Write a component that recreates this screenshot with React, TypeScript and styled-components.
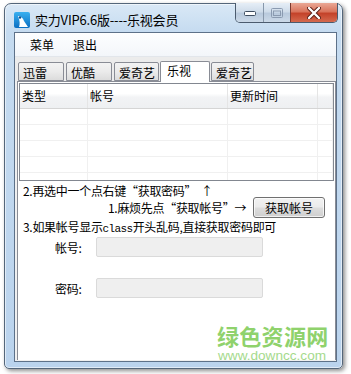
import React from 'react';
import styled, { createGlobalStyle } from 'styled-components';

const GlobalStyle = createGlobalStyle`
  html, body {
    margin: 0;
    padding: 0;
    background: #ffffff;
  }
  * {
    box-sizing: border-box;
  }
`;

const cjk = `"Noto Sans CJK SC", "Noto Sans", sans-serif`;

const Screen = styled.div`
  width: 351px;
  height: 374px;
  padding: 3px 0 0 4px;
  overflow: hidden;
  font-family: ${cjk};
  font-size: 12px;
  color: #000;
`;

const Frame = styled.div`
  width: 339px;
  height: 366px;
  display: flex;
  flex-direction: column;
  border: 1px solid #54667a;
  border-radius: 7px 7px 5px 5px;
  background: linear-gradient(180deg, #d9e8f6 0px, #c5dbf0 28px, #bad3ed 100%);
  box-shadow: 2px 2px 4px rgba(0, 0, 0, 0.45), inset 0 0 0 1px rgba(255, 255, 255, 0.55);
`;

const TitleBar = styled.div`
  height: 28px;
  display: flex;
  align-items: flex-start;
  flex-shrink: 0;
`;

const AppIcon = styled.svg`
  margin: 8px 0 0 9px;
  flex-shrink: 0;
`;

const Title = styled.div`
  margin: 7px 0 0 5px;
  font-size: 13px;
  line-height: 18px;
  letter-spacing: -0.2px;
`;

const Controls = styled.div`
  margin: -1px 4px 0 auto;
  display: flex;
  border: 1px solid #4b5b6e;
  border-top: none;
  border-radius: 0 0 5px 5px;
  overflow: hidden;
`;

const CtlButton = styled.div<{ $w: number; $close?: boolean }>`
  width: ${({ $w }) => $w}px;
  height: 19px;
  display: flex;
  align-items: center;
  justify-content: center;
  border-left: ${({ $close }) => ($close ? '1px solid #7a3a30' : '1px solid #8797aa')};
  background: ${({ $close }) =>
    $close
      ? 'linear-gradient(180deg, #eaa896 0%, #d9755d 45%, #c4432a 55%, #d4694e 100%)'
      : 'linear-gradient(180deg, #e6eef7 0%, #cfdcea 45%, #b9cadd 55%, #cbd9e8 100%)'};
  &:first-child {
    border-left: none;
  }
`;

const Client = styled.div`
  flex: 1;
  margin: 0 5px 6px 9px;
  display: flex;
  flex-direction: column;
  border: 1px solid #5d7189;
  background: #f0f0f0;
`;

const MenuBar = styled.div`
  height: 24px;
  display: flex;
  align-items: center;
  padding-left: 15px;
  gap: 19px;
  background: linear-gradient(180deg, #fdfeff 0%, #f3f6fa 100%);
  border-bottom: 1px solid #e2e6eb;
`;

const MenuItem = styled.span`
  line-height: 16px;
`;

const TabStrip = styled.div`
  height: 24px;
  display: flex;
  align-items: flex-end;
  gap: 2px;
  padding-left: 3px;
  background: #ececec;
`;

const Tab = styled.div<{ $w: number; $active?: boolean }>`
  width: ${({ $w }) => $w}px;
  height: ${({ $active }) => ($active ? 21 : 19)}px;
  margin: ${({ $active }) => ($active ? '0 -1px -1px' : '0')};
  padding: ${({ $active }) => ($active ? '1px 0 0 6px' : '2px 0 0 4px')};
  border: 1px solid #898c95;
  border-bottom: ${({ $active }) => ($active ? 'none' : '1px solid #898c95')};
  border-radius: 2px 2px 0 0;
  background: ${({ $active }) =>
    $active ? '#ffffff' : 'linear-gradient(180deg, #f3f3f3 0%, #ebebeb 50%, #dcdcdc 100%)'};
  font-size: 12px;
  line-height: 15px;
  position: relative;
  z-index: ${({ $active }) => ($active ? 2 : 1)};
`;

const Panel = styled.div`
  flex: 1;
  margin: 0 0 1px 2px;
  position: relative;
  background: #ffffff;
  border: 1px solid #898c95;
  border-bottom: none;
  padding: 1px 1px 0 1px;
  display: flex;
  flex-direction: column;
`;

const ListView = styled.div`
  height: 98px;
  border: 1px solid #828790;
  overflow: hidden;
  flex-shrink: 0;
`;

const HeaderRow = styled.div`
  height: 25px;
  display: flex;
  background: linear-gradient(180deg, #ffffff 0%, #ffffff 40%, #f2f3f5 55%, #eef0f2 100%);
  border-bottom: 1px solid #d5d5d5;
`;

const HeaderCell = styled.div<{ $w?: number }>`
  ${({ $w }) => ($w ? `width: ${$w}px;` : 'flex: 1;')}
  padding: 5px 0 0 ${({ $w }) => ($w ? 2 : 0)}px;
  border-right: 1px solid #e5e5e5;
  font-size: 12px;
  line-height: 14px;
`;

const GridRow = styled.div`
  height: 16px;
  display: flex;
  border-bottom: 1px solid #f0f0f0;
`;

const GridCell = styled.div<{ $w?: number }>`
  ${({ $w }) => ($w ? `width: ${$w}px;` : 'flex: 1;')}
  border-right: 1px solid #f0f0f0;
`;

const Info = styled.div`
  display: flex;
  flex-direction: column;
  padding-left: 4px;
`;

const Line = styled.div<{ $h: number; $indent?: number; $top?: number }>`
  height: ${({ $h }) => $h}px;
  display: flex;
  align-items: center;
  padding-left: ${({ $indent }) => $indent ?? 0}px;
  margin-top: ${({ $top }) => $top ?? 0}px;
  white-space: nowrap;
  font-size: 12px;
  letter-spacing: -0.3px;
`;

const TextLine = styled.div<{ $h: number }>`
  height: ${({ $h }) => $h}px;
  line-height: ${({ $h }) => $h}px;
  white-space: nowrap;
  font-size: 12px;
  letter-spacing: -0.3px;
`;

const Mono = styled.span`
  font-family: "Liberation Mono", monospace;
  font-size: 11px;
  letter-spacing: -0.6px;
  vertical-align: baseline;
`;

const PushButton = styled.div`
  width: 72px;
  height: 21px;
  margin-left: 7px;
  display: flex;
  align-items: center;
  justify-content: center;
  border: 1px solid #707070;
  border-radius: 3px;
  background: linear-gradient(180deg, #f2f2f2 0%, #ebebeb 48%, #dddddd 52%, #cfcfcf 100%);
  box-shadow: inset 0 0 0 1px rgba(255, 255, 255, 0.7);
  font-size: 12px;
  letter-spacing: 0;
`;

const Label = styled.span`
  width: 41px;
`;

const TextBox = styled.div`
  width: 167px;
  height: 20px;
  background: #efefef;
  border: 1px solid #dadada;
  border-radius: 2px;
`;

const Watermark = styled.div`
  position: absolute;
  left: 199px;
  top: 241px;
  display: flex;
  flex-direction: column;
  gap: 1px;
  pointer-events: none;
`;

const WmTitle = styled.div`
  font-family: ${cjk};
  font-size: 22px;
  font-weight: 700;
  line-height: 24px;
  color: #8fd26c;
  letter-spacing: 0.3px;
`;

const WmUrl = styled.div`
  font-family: "Liberation Sans", Arial, sans-serif;
  font-size: 13.6px;
  line-height: 15px;
  color: #a5da8c;
  margin-left: 1px;
`;

const cols = [68, 140, 90];

const tabs = [
  { label: '迅雷', w: 46 },
  { label: '优酷', w: 46 },
  { label: '爱奇艺', w: 45 },
  { label: '乐视', w: 50, active: true },
  { label: '爱奇艺', w: 43 },
];

const MinGlyph = () => (
  <svg width="12" height="6" viewBox="0 0 12 6">
    <rect x="0.5" y="1.5" width="11" height="4" rx="1" fill="#fff" stroke="#3f4e60" />
  </svg>
);

const MaxGlyph = () => (
  <svg width="12" height="10" viewBox="0 0 12 10">
    <rect x="0.5" y="0.5" width="11" height="9" rx="1" fill="none" stroke="#8a9ab0" />
    <rect x="2.5" y="3" width="7" height="4.5" fill="none" stroke="#8a9ab0" />
  </svg>
);

const CloseGlyph = () => (
  <svg width="14" height="12" viewBox="0 0 14 12">
    <path d="M2 1 L12 11 M12 1 L2 11" stroke="#5a1d14" strokeWidth="4.2" strokeLinecap="round" />
    <path d="M2 1 L12 11 M12 1 L2 11" stroke="#ffffff" strokeWidth="2.4" strokeLinecap="round" />
  </svg>
);

export default function App() {
  return (
    <Screen>
      <GlobalStyle />
      <Frame>
        <TitleBar>
          <AppIcon width="16" height="16" viewBox="0 0 16 16">
            <defs>
              <linearGradient id="ig" x1="0" y1="0" x2="0" y2="1">
                <stop offset="0" stopColor="#3ab0f0" />
                <stop offset="1" stopColor="#0b6fc2" />
              </linearGradient>
            </defs>
            <rect x="0" y="0" width="16" height="16" rx="2" fill="url(#ig)" />
            <path d="M4 4 C7 4 9 6 10 9 L14 15 L5 15 C6 12 6 9 4 4 Z" fill="#ffffff" />
            <circle cx="6" cy="5.5" r="1.2" fill="#0b4f8f" />
          </AppIcon>
          <Title>实力VIP6.6版----乐视会员</Title>
          <Controls>
            <CtlButton $w={27}>
              <MinGlyph />
            </CtlButton>
            <CtlButton $w={27}>
              <MaxGlyph />
            </CtlButton>
            <CtlButton $w={47} $close>
              <CloseGlyph />
            </CtlButton>
          </Controls>
        </TitleBar>
        <Client>
          <MenuBar>
            <MenuItem>菜单</MenuItem>
            <MenuItem>退出</MenuItem>
          </MenuBar>
          <TabStrip>
            {tabs.map((t, i) => (
              <Tab key={i} $w={t.w} $active={t.active}>
                {t.label}
              </Tab>
            ))}
          </TabStrip>
          <Panel>
            <ListView>
              <HeaderRow>
                <HeaderCell $w={cols[0]}>类型</HeaderCell>
                <HeaderCell $w={cols[1]}>帐号</HeaderCell>
                <HeaderCell $w={cols[2]}>更新时间</HeaderCell>
                <HeaderCell />
              </HeaderRow>
              {[0, 1, 2, 3, 4].map((r) => (
                <GridRow key={r}>
                  <GridCell $w={cols[0]} />
                  <GridCell $w={cols[1]} />
                  <GridCell $w={cols[2]} />
                  <GridCell />
                </GridRow>
              ))}
            </ListView>
            <Info>
              <Line $h={16} $top={1}>
                2.再选中一个点右键“获取密码” &nbsp;↑
              </Line>
              <Line $h={21} $indent={85} $top={-1}>
                1.麻烦先点“获取帐号”→
                <PushButton>获取帐号</PushButton>
              </Line>
              <TextLine $h={18}>
                3.如果帐号显示<Mono>class</Mono>开头乱码,直接获取密码即可
              </TextLine>
              <Line $h={20} $indent={32} $top={1}>
                <Label>帐号:</Label>
                <TextBox />
              </Line>
              <Line $h={20} $indent={32} $top={21}>
                <Label>密码:</Label>
                <TextBox />
              </Line>
            </Info>
            <Watermark>
              <WmTitle>绿色资源网</WmTitle>
              <WmUrl>www.downcc.com</WmUrl>
            </Watermark>
          </Panel>
        </Client>
      </Frame>
    </Screen>
  );
}
